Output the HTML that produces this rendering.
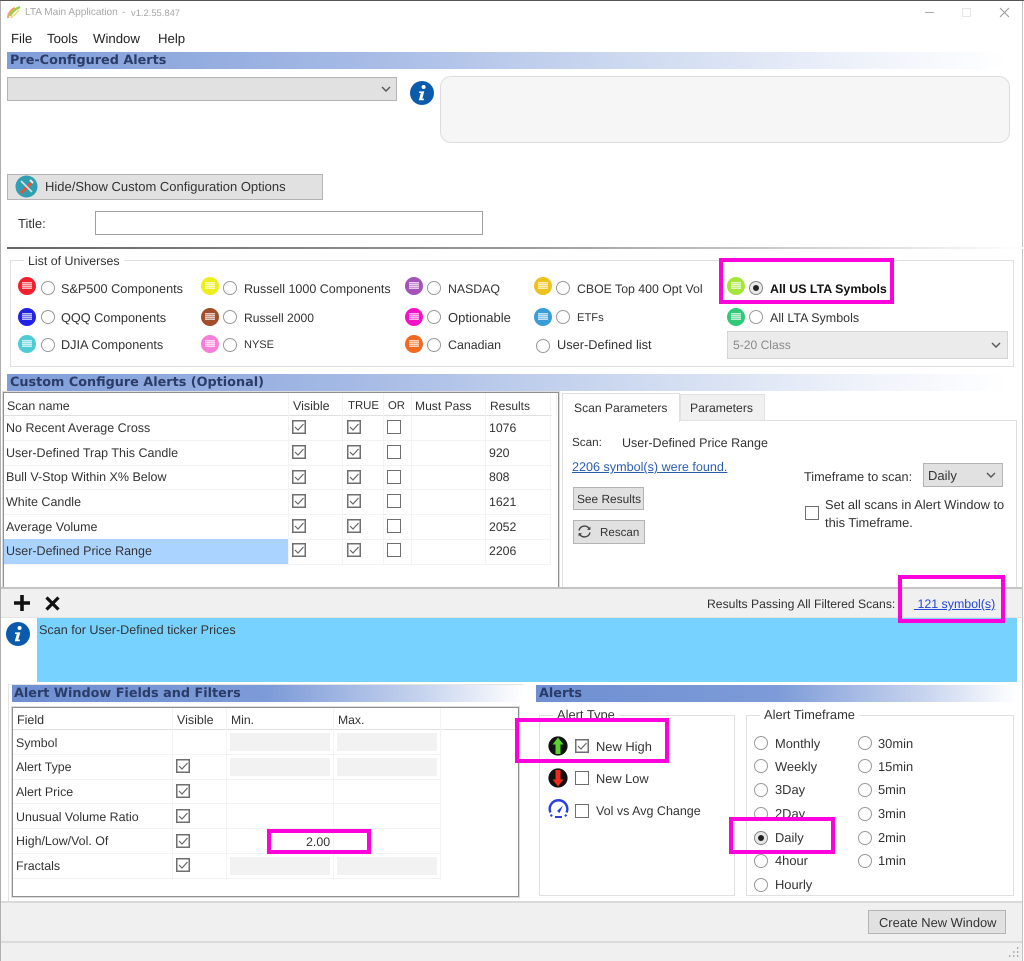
<!DOCTYPE html>
<html><head><meta charset="utf-8"><title>LTA Main Application</title>
<style>
html,body{margin:0;padding:0;background:#fff}
#p{position:relative;width:1024px;height:961px;overflow:hidden;background:#fff;filter:blur(.3px);font-family:"Liberation Sans",sans-serif;font-size:12.5px;color:#333;text-rendering:geometricPrecision}
#p div,#p span,#p svg,#p a{position:absolute;box-sizing:border-box}
.t{white-space:nowrap;line-height:16px;height:16px}
.bar{height:17px;font:bold 12.8px/17px "DejaVu Sans",sans-serif;color:#2b3c68;padding-left:3px;white-space:nowrap;text-rendering:geometricPrecision}
.b1{background:linear-gradient(90deg,#7f9dd9 0%,#a5bae5 35%,#cdd9f0 62%,#eef2fa 85%,#fff 100%)}
.b2{background:linear-gradient(90deg,#6e8fd2 0%,#7d9bd8 50%,#c6d3ee 80%,#fff 100%)}
.btn{background:#e1e1e1;border:1.5px solid #b4b4b4}
.g{border:1.5px solid #e0e0e0}
.lg{background:#fff;padding:0 4px;white-space:nowrap;line-height:16px;height:16px}
.m{border:4px solid #ff00dc;background:transparent}
.r{width:14px;height:14px;border-radius:50%;border:1.6px solid #999;background:#fff}
.rs{width:14px;height:14px;border-radius:50%;border:1.6px solid #888;background:#e8e8e8}
.rs i{position:absolute;left:3px;top:3px;width:6px;height:6px;border-radius:50%;background:#222}
.c{width:14px;height:14px;border:1.5px solid #6f6f6f;background:#fff}
.k{width:18px;height:18px;border-radius:50%}
.k i{position:absolute;left:4px;top:5px;width:10px;height:7px;background:repeating-linear-gradient(0deg,rgba(255,255,255,.7) 0 1px,rgba(255,255,255,.4) 1px 2px)}
.v{background:#f3f3f3;height:1px}
.l{background:#f3f3f3;width:1px}
.d{background:#f2f2f2;height:18px}
.w{font-size:12.9px}
.tb{background:#fff;border:1px solid #909090;box-shadow:0 0 0 1px #dcdcdc}
</style></head><body>
<div id="p">
<svg width="0" height="0" style="left:0;top:0"><defs>
<symbol id="ck" viewBox="0 0 14 14"><rect x=".75" y=".75" width="12.5" height="12.5" fill="#fff" stroke="#6f6f6f" stroke-width="1.5"/><path d="M3 7l3 3 5.500-6" fill="none" stroke="#666" stroke-width="1.200"/></symbol>
<symbol id="chev" viewBox="0 0 10 6"><path d="M1 1l4 4 4-4" fill="none" stroke="#555" stroke-width="1.400"/></symbol>
<symbol id="info" viewBox="0 0 24 24"><circle cx="12" cy="12" r="12" fill="#0a5bab"/><circle cx="13.600" cy="6" r="2" fill="#fff"/><path d="M9.300 10.400h5l-2 7.200h1.800l-.5 1.600H8.800l2-7.200H8.900z" fill="#fff"/></symbol>
</defs></svg>

<!-- window frame -->
<div style="left:0;top:0;width:1024px;height:1px;background:#555"></div>
<div style="left:0;top:1px;width:1px;height:960px;background:#b0b0b0"></div>
<div style="left:1022px;top:1px;width:1px;height:960px;background:#c4c4c4"></div>

<!-- title bar -->
<svg style="left:6px;top:5px" width="16" height="15" viewBox="0 0 16 15"><path d="M2 13C2 8 6 4 9 3" fill="none" stroke="#f4a06a" stroke-width="2"/><path d="M4 11C6 7 9 4 14 2" fill="none" stroke="#9ccf4a" stroke-width="2.400"/><path d="M5 13C8 10 11 8 13 5" fill="none" stroke="#e9dc6a" stroke-width="1.400"/></svg>
<div class="t" style="left:25px;top:5px;font-size:10.1px;color:#a8a8a8">LTA Main Application</div>
<div class="t" style="left:122px;top:5px;font-size:10.1px;color:#a8a8a8">-</div>
<div class="t" style="left:131px;top:5px;font-size:9.400px;color:#a8a8a8">v1.2.55.847</div>
<div style="left:925px;top:12px;width:9px;height:1px;background:#aaa"></div>
<div style="left:962px;top:8px;width:9px;height:9px;border:1px solid #e6e6e6"></div>
<svg style="left:999px;top:7px" width="11" height="11" viewBox="0 0 11 11"><path d="M1 1l9 9M10 1l-9 9" stroke="#999" stroke-width="1"/></svg>

<!-- menu -->
<div class="t" style="left:11px;top:31px;color:#222;font-size:13.2px">File</div>
<div class="t" style="left:47px;top:31px;color:#222;font-size:13.2px">Tools</div>
<div class="t" style="left:93px;top:31px;color:#222;font-size:13.2px">Window</div>
<div class="t" style="left:158px;top:31px;color:#222;font-size:13.2px">Help</div>

<!-- pre-configured -->
<div class="bar b1" style="left:7px;top:52px;width:1000px">Pre-Configured Alerts</div>
<div class="btn" style="left:7px;top:77px;width:390px;height:24px"></div>
<svg style="left:381px;top:86px" width="10" height="6"><use href="#chev"/></svg>
<svg style="left:410px;top:81px" width="24" height="24"><use href="#info"/></svg>
<div style="left:440px;top:76px;width:570px;height:67px;border-radius:11px;background:#f6f6f6;border:1.5px solid #dcdcdc"></div>

<div class="btn" style="left:7px;top:174px;width:316px;height:26px"></div>
<svg style="left:15px;top:175px" width="23" height="23" viewBox="0 0 23 23"><circle cx="11.500" cy="11.500" r="11" fill="#2f9fb1"/><path d="M6 18L16 8" stroke="#e2553a" stroke-width="3"/><path d="M6 6l11 11" stroke="#d5e4ea" stroke-width="1.600"/><path d="M15 5l3 3" stroke="#e8eef0" stroke-width="2"/></svg>
<div class="t" style="left:45px;top:179px;font-size:13px">Hide/Show Custom Configuration Options</div>
<div class="t" style="left:18px;top:216px;font-size:13px">Title:</div>
<div style="left:95px;top:211px;width:388px;height:24px;border:1.5px solid #a0a0a0;background:#fff"></div>
<div style="left:7px;top:247px;width:1017px;height:2px;background:linear-gradient(90deg,#666 0%,#9a9a9a 50%,#ddd 85%,#fff 100%)"></div>

<!-- universes -->
<div class="g" style="left:10px;top:260px;width:1004px;height:107px"></div>
<div class="lg" style="left:24px;top:253px;font-size:12.4px">List of Universes</div>

<div class="k" style="left:18px;top:277px;background:#f0202f"><i></i></div><div class="r" style="left:41px;top:281px"></div><div class="t" style="left:61px;top:281px;font-size:12.7px">S&amp;P500 Components</div>
<div class="k" style="left:18px;top:308px;background:#2222e6"><i></i></div><div class="r" style="left:41px;top:310px"></div><div class="t" style="left:61px;top:310px;font-size:12.7px">QQQ Components</div>
<div class="k" style="left:18px;top:335px;background:#4fcbd6"><i></i></div><div class="r" style="left:41px;top:338px"></div><div class="t" style="left:61px;top:337px;font-size:12.7px">DJIA Components</div>

<div class="k" style="left:201px;top:277px;background:#ecef1c"><i></i></div><div class="r" style="left:223px;top:281px"></div><div class="t" style="left:244px;top:281px">Russell 1000 Components</div>
<div class="k" style="left:201px;top:308px;background:#a24e2c"><i></i></div><div class="r" style="left:223px;top:310px"></div><div class="t" style="left:244px;top:310px;font-size:12.1px">Russell 2000</div>
<div class="k" style="left:201px;top:335px;background:#f77fd8"><i></i></div><div class="r" style="left:223px;top:338px"></div><div class="t" style="left:244px;top:337px;font-size:11px">NYSE</div>

<div class="k" style="left:405px;top:277px;background:#a354b8"><i></i></div><div class="r" style="left:427px;top:281px"></div><div class="t" style="left:448px;top:281px;font-size:12.3px">NASDAQ</div>
<div class="k" style="left:405px;top:308px;background:#f312c8"><i></i></div><div class="r" style="left:427px;top:310px"></div><div class="t" style="left:448px;top:310px;font-size:13px">Optionable</div>
<div class="k" style="left:405px;top:335px;background:#f26a1f"><i></i></div><div class="r" style="left:427px;top:338px"></div><div class="t" style="left:448px;top:337px;font-size:12.4px">Canadian</div>

<div class="k" style="left:534px;top:277px;background:#eec21c"><i></i></div><div class="r" style="left:556px;top:281px"></div><div class="t" style="left:577px;top:281px;font-size:12.3px">CBOE Top 400 Opt Vol</div>
<div class="k" style="left:534px;top:308px;background:#399ed8"><i></i></div><div class="r" style="left:556px;top:310px"></div><div class="t" style="left:577px;top:310px;font-size:11.2px">ETFs</div>
<div class="r" style="left:536px;top:339px"></div><div class="t" style="left:557px;top:337px;font-size:12.8px">User-Defined list</div>

<div class="k" style="left:727px;top:277px;background:#a6e53a"><i></i></div><div class="rs" style="left:749px;top:281px"><i></i></div><div class="t" style="left:770px;top:281px;font-weight:bold;color:#111;font-size:12.4px">All US LTA Symbols</div>
<div class="k" style="left:727px;top:308px;background:#2fc977"><i></i></div><div class="r" style="left:749px;top:310px"></div><div class="t" style="left:770px;top:310px">All LTA Symbols</div>
<div style="left:727px;top:331px;width:281px;height:28px;background:#ebebeb;border:1.5px solid #d4d4d4"></div>
<div class="t" style="left:733px;top:337px;color:#8a8a8a;font-size:12.1px">5-20 Class</div>
<svg style="left:991px;top:342px" width="10" height="6"><use href="#chev"/></svg>

<!-- custom configure -->
<div class="bar b1" style="left:7px;top:374px;width:1000px">Custom Configure Alerts (Optional)</div>
<div class="tb" style="left:3px;top:392px;width:556px;height:196px"></div>
<div style="left:4px;top:415px;width:548px;height:1px;background:#e0e0e0"></div>
<div class="l" style="left:288px;top:393px;height:172px"></div>
<div class="l" style="left:342px;top:393px;height:172px"></div>
<div class="l" style="left:383px;top:393px;height:172px"></div>
<div class="l" style="left:411px;top:393px;height:172px"></div>
<div class="l" style="left:485px;top:393px;height:172px"></div>
<div class="l" style="left:550px;top:393px;height:172px"></div>
<div class="l" style="left:556px;top:393px;height:23px"></div>
<div class="v" style="left:4px;top:440px;width:547px"></div>
<div class="v" style="left:4px;top:465px;width:547px"></div>
<div class="v" style="left:4px;top:489px;width:547px"></div>
<div class="v" style="left:4px;top:514px;width:547px"></div>
<div class="v" style="left:4px;top:539px;width:547px"></div>
<div class="v" style="left:4px;top:564px;width:547px"></div>
<div style="left:4px;top:539px;width:284px;height:25px;background:#aad4ff"></div>

<div class="t" style="left:7px;top:398px;font-size:12.4px">Scan name</div>
<div class="t" style="left:293px;top:398px">Visible</div>
<div class="t" style="left:348px;top:398px;font-size:11.4px">TRUE</div>
<div class="t" style="left:388px;top:398px;font-size:11.3px">OR</div>
<div class="t" style="left:415px;top:398px;font-size:12.1px">Must Pass</div>
<div class="t" style="left:490px;top:398px;font-size:12px">Results</div>

<div class="t" style="left:6px;top:420px">No Recent Average Cross</div>
<div class="t" style="left:6px;top:445px">User-Defined Trap This Candle</div>
<div class="t" style="left:6px;top:469px">Bull V-Stop Within X% Below</div>
<div class="t" style="left:6px;top:494px">White Candle</div>
<div class="t" style="left:6px;top:519px">Average Volume</div>
<div class="t" style="left:6px;top:543px">User-Defined Price Range</div>

<div class="t" style="left:489px;top:420px;font-size:12.3px">1076</div>
<div class="t" style="left:489px;top:445px;font-size:12.3px">920</div>
<div class="t" style="left:489px;top:469px;font-size:12.3px">808</div>
<div class="t" style="left:489px;top:494px;font-size:12.3px">1621</div>
<div class="t" style="left:489px;top:519px;font-size:12.3px">2052</div>
<div class="t" style="left:489px;top:543px;font-size:12.3px">2206</div>

<svg style="left:292px;top:420px" width="14" height="14"><use href="#ck"/></svg><svg style="left:347px;top:420px" width="14" height="14"><use href="#ck"/></svg><div class="c" style="left:387px;top:420px"></div>
<svg style="left:292px;top:445px" width="14" height="14"><use href="#ck"/></svg><svg style="left:347px;top:445px" width="14" height="14"><use href="#ck"/></svg><div class="c" style="left:387px;top:445px"></div>
<svg style="left:292px;top:470px" width="14" height="14"><use href="#ck"/></svg><svg style="left:347px;top:470px" width="14" height="14"><use href="#ck"/></svg><div class="c" style="left:387px;top:470px"></div>
<svg style="left:292px;top:494px" width="14" height="14"><use href="#ck"/></svg><svg style="left:347px;top:494px" width="14" height="14"><use href="#ck"/></svg><div class="c" style="left:387px;top:494px"></div>
<svg style="left:292px;top:519px" width="14" height="14"><use href="#ck"/></svg><svg style="left:347px;top:519px" width="14" height="14"><use href="#ck"/></svg><div class="c" style="left:387px;top:519px"></div>
<svg style="left:292px;top:543px" width="14" height="14"><use href="#ck"/></svg><svg style="left:347px;top:543px" width="14" height="14"><use href="#ck"/></svg><div class="c" style="left:387px;top:543px"></div>

<!-- tabs -->
<div style="left:562px;top:420px;width:455px;height:168px;border:1.5px solid #e0e0e0;background:#fff"></div>
<div style="left:680px;top:394px;width:85px;height:27px;background:#f0f0f0;border:1px solid #e2e2e2"></div>
<div style="left:562px;top:393px;width:118px;height:29px;background:#fff;border:1.5px solid #e0e0e0;border-bottom:0"></div>
<div class="t" style="left:574px;top:400px;font-size:12.1px">Scan Parameters</div>
<div class="t" style="left:690px;top:400px;font-size:12.2px">Parameters</div>
<div class="t" style="left:572px;top:435px;font-size:11.7px">Scan:</div>
<div class="t" style="left:622px;top:435px">User-Defined Price Range</div>
<div class="t" style="left:572px;top:459px;color:#2a5db0;text-decoration:underline;font-size:12.6px">2206 symbol(s) were found.</div>
<div class="btn" style="left:573px;top:487px;width:71px;height:23px"></div>
<div class="t" style="left:577px;top:491px;font-size:11.9px">See Results</div>
<div class="btn" style="left:573px;top:520px;width:72px;height:24px"></div>
<svg style="left:577px;top:524px" width="15" height="15" viewBox="0 0 15 15"><path d="M2 6.500a5.600 5.600 0 0 1 10.300-1.600M13 8.500a5.600 5.600 0 0 1-10.300 1.600" fill="none" stroke="#444" stroke-width="1.400"/><path d="M13.400 2.500v3.400h-3.400zM1.600 12.500V9.100H5z" fill="#444"/></svg>
<div class="t" style="left:600px;top:525px;font-size:11.6px">Rescan</div>
<div class="t" style="left:804px;top:469px;font-size:12.700px">Timeframe to scan:</div>
<div class="btn" style="left:923px;top:463px;width:80px;height:24px"></div>
<div class="t" style="left:928px;top:468px;font-size:13px">Daily</div>
<svg style="left:986px;top:472px" width="10" height="6"><use href="#chev"/></svg>
<div class="c" style="left:805px;top:506px"></div>
<div class="t" style="left:825px;top:497px;font-size:12.85px">Set all scans in Alert Window to</div>
<div class="t" style="left:825px;top:515px;font-size:12.85px">this Timeframe.</div>

<!-- toolbar -->
<div style="left:1px;top:587px;width:1021px;height:31px;background:#f0f0f0;border-top:2px solid #c4c4c4;border-bottom:1px solid #e4e4e4"></div>
<svg style="left:13px;top:594px" width="18" height="18" viewBox="0 0 18 18"><path d="M9 1v16M1 9h16" stroke="#111" stroke-width="3.600"/></svg>
<svg style="left:45px;top:596px" width="15" height="15" viewBox="0 0 15 15"><path d="M1.500 1.500l12 12M13.500 1.500l-12 12" stroke="#111" stroke-width="3.200"/></svg>
<div class="t" style="left:707px;top:596px;font-size:12.2px">Results Passing All Filtered Scans:</div>
<div class="t" style="left:914px;top:596px;color:#2345d8;text-decoration:underline;font-size:12.4px">&nbsp;121 symbol(s)</div>

<!-- description -->
<div style="left:37px;top:618px;width:980px;height:64px;background:#78d2ff"></div>
<div class="t" style="left:39px;top:622px;font-size:12.6px">Scan for User-Defined ticker Prices</div>
<svg style="left:6px;top:622px" width="24" height="24"><use href="#info"/></svg>

<!-- alert window fields -->
<div style="left:8px;top:684px;width:515px;height:217px;border-left:1.5px solid #e4e4e4;border-top:1.5px solid #e4e4e4"></div>
<div class="bar b2" style="left:12px;top:685px;width:511px;padding-left:2px">Alert Window Fields and Filters</div>
<div class="tb" style="left:12px;top:707px;width:507px;height:190px"></div>
<div style="left:13px;top:729px;width:505px;height:1px;background:#e0e0e0"></div>
<div class="l" style="left:172px;top:708px;height:172px"></div>
<div class="l" style="left:226px;top:708px;height:172px"></div>
<div class="l" style="left:333px;top:708px;height:172px"></div>
<div class="l" style="left:440px;top:708px;height:172px"></div>
<div class="v" style="left:13px;top:754px;width:428px"></div>
<div class="v" style="left:13px;top:779px;width:428px"></div>
<div class="v" style="left:13px;top:803px;width:428px"></div>
<div class="v" style="left:13px;top:828px;width:428px"></div>
<div class="v" style="left:13px;top:853px;width:428px"></div>
<div class="v" style="left:13px;top:878px;width:428px"></div>
<div class="d" style="left:230px;top:733px;width:100px"></div><div class="d" style="left:337px;top:733px;width:100px"></div>
<div class="d" style="left:230px;top:758px;width:100px"></div><div class="d" style="left:337px;top:758px;width:100px"></div>
<div class="d" style="left:230px;top:857px;width:100px"></div><div class="d" style="left:337px;top:857px;width:100px"></div>

<div class="t" style="left:17px;top:712px">Field</div>
<div class="t" style="left:177px;top:712px">Visible</div>
<div class="t" style="left:231px;top:712px;font-size:12.2px">Min.</div>
<div class="t" style="left:338px;top:712px;font-size:12.2px">Max.</div>
<div class="t" style="left:16px;top:735px;font-size:12.4px">Symbol</div>
<div class="t" style="left:16px;top:759px;font-size:12.4px">Alert Type</div>
<div class="t" style="left:16px;top:784px;font-size:12.4px">Alert Price</div>
<div class="t" style="left:16px;top:809px;font-size:12.4px">Unusual Volume Ratio</div>
<div class="t" style="left:16px;top:833px;font-size:12.4px">High/Low/Vol. Of</div>
<div class="t" style="left:16px;top:858px;font-size:12.4px">Fractals</div>
<svg style="left:176px;top:759px" width="14" height="14"><use href="#ck"/></svg>
<svg style="left:176px;top:784px" width="14" height="14"><use href="#ck"/></svg>
<svg style="left:176px;top:809px" width="14" height="14"><use href="#ck"/></svg>
<svg style="left:176px;top:834px" width="14" height="14"><use href="#ck"/></svg>
<svg style="left:176px;top:858px" width="14" height="14"><use href="#ck"/></svg>
<div class="t" style="left:306px;top:834px;font-size:12.400px">2.00</div>

<!-- alerts -->
<div class="bar b2" style="left:536px;top:685px;width:481px">Alerts</div>
<div class="g" style="left:539px;top:715px;width:196px;height:181px"></div>
<div class="lg w" style="left:553px;top:707px">Alert Type</div>
<div class="g" style="left:746px;top:715px;width:268px;height:181px"></div>
<div class="lg w" style="left:760px;top:707px">Alert Timeframe</div>

<svg style="left:548px;top:736px" width="20" height="20" viewBox="0 0 20 20"><circle cx="10" cy="10" r="9.600" fill="#111"/><path d="M10 1.500l5.500 7h-3v9.500h-5V8.500h-3z" fill="#58d12a"/></svg>
<svg style="left:548px;top:768px" width="20" height="20" viewBox="0 0 20 20"><circle cx="10" cy="10" r="9.600" fill="#111"/><path d="M10 18.500l5.500-7h-3V2h-5v9.500h-3z" fill="#ee2a1c"/></svg>
<svg style="left:547px;top:799px" width="23" height="20" viewBox="0 0 23 20"><path d="M3.400 13.500A8.800 8.800 0 1 1 19.600 13.500" fill="none" stroke="#2a3fe0" stroke-width="2.400"/><path d="M3.600 15.600l1.400 1.800M19.400 15.600l-1.400 1.800" stroke="#2a3fe0" stroke-width="2"/><path d="M10 12l6-5.500-3.500 7.500z" fill="#2a3fe0"/><path d="M8 18h7" stroke="#2a3fe0" stroke-width="2"/></svg>
<svg style="left:575px;top:739px" width="14" height="14"><use href="#ck"/></svg>
<div class="c" style="left:575px;top:771px"></div>
<div class="c" style="left:575px;top:804px"></div>
<div class="t w" style="left:596px;top:739px">New High</div>
<div class="t" style="left:596px;top:771px;font-size:12.8px">New Low</div>
<div class="t" style="left:596px;top:803px">Vol vs Avg Change</div>

<div class="r" style="left:754px;top:736px"></div><div class="t w" style="left:775px;top:736px">Monthly</div>
<div class="r" style="left:754px;top:759px"></div><div class="t w" style="left:775px;top:759px">Weekly</div>
<div class="r" style="left:754px;top:783px"></div><div class="t w" style="left:775px;top:782px">3Day</div>
<div class="r" style="left:754px;top:807px"></div><div class="t w" style="left:775px;top:806px">2Day</div>
<div class="rs" style="left:754px;top:831px"><i></i></div><div class="t w" style="left:775px;top:830px">Daily</div>
<div class="r" style="left:754px;top:854px"></div><div class="t w" style="left:775px;top:853px">4hour</div>
<div class="r" style="left:754px;top:878px"></div><div class="t w" style="left:775px;top:877px">Hourly</div>
<div class="r" style="left:858px;top:736px"></div><div class="t w" style="left:878px;top:736px">30min</div>
<div class="r" style="left:858px;top:759px"></div><div class="t w" style="left:878px;top:759px">15min</div>
<div class="r" style="left:858px;top:783px"></div><div class="t w" style="left:878px;top:782px">5min</div>
<div class="r" style="left:858px;top:807px"></div><div class="t w" style="left:878px;top:806px">3min</div>
<div class="r" style="left:858px;top:831px"></div><div class="t w" style="left:878px;top:830px">2min</div>
<div class="r" style="left:858px;top:854px"></div><div class="t w" style="left:878px;top:853px">1min</div>

<!-- bottom -->
<div style="left:1px;top:901px;width:1021px;height:42px;background:#f0f0f0;border-top:2px solid #dadada;border-bottom:2px solid #dadada"></div>
<div style="left:1px;top:943px;width:1021px;height:18px;background:#f0f0f0"></div>
<div class="btn" style="left:868px;top:910px;width:138px;height:24px"></div>
<div class="t" style="left:879px;top:915px;font-size:12.9px">Create New Window</div>
<svg style="left:1006px;top:946px" width="14" height="12" viewBox="0 0 14 12"><path d="M11 2h1.400M7 6h1.400M11 6h1.400M3 10h1.400M7 10h1.400M11 10h1.400" stroke="#999" stroke-width="1.400"/></svg>

<!-- annotations -->
<div class="m" style="left:719px;top:258px;width:175px;height:46px"></div>
<div class="m" style="left:898px;top:575px;width:107px;height:48px"></div>
<div class="m" style="left:515px;top:718px;width:154px;height:45px"></div>
<div class="m" style="left:729px;top:817px;width:106px;height:37px"></div>
<div class="m" style="left:267px;top:829px;width:104px;height:25px"></div>
</div>
</body></html>
